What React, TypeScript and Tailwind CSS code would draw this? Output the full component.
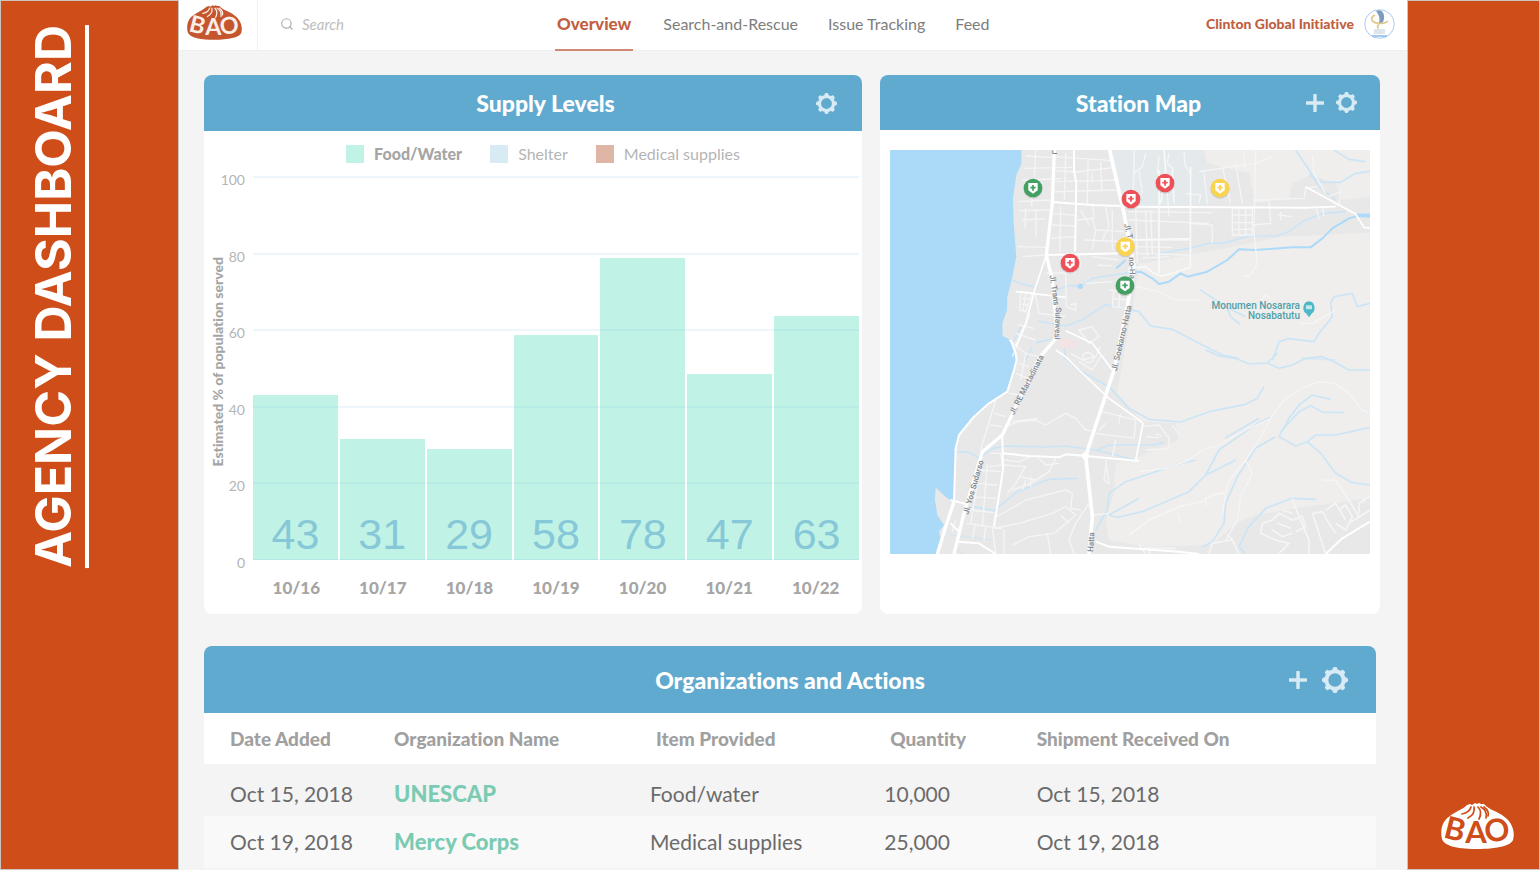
import { ReactNode } from "react";
import { Search } from "lucide-react";

interface SupplyDay {
  date: string;
  served: number;
  level: number;
}

interface Shipment {
  added: string;
  organization: string;
  item: string;
  quantity: string;
  received: string;
}

const supplyDays: SupplyDay[] = [
  { date: "10/16", served: 43, level: 43 },
  { date: "10/17", served: 31, level: 31.4 },
  { date: "10/18", served: 29, level: 29 },
  { date: "10/19", served: 58, level: 58.7 },
  { date: "10/20", served: 78, level: 78.7 },
  { date: "10/21", served: 47, level: 48.4 },
  { date: "10/22", served: 63, level: 63.6 },
];

const shipments: Shipment[] = [
  {
    added: "Oct 15, 2018",
    organization: "UNESCAP",
    item: "Food/water",
    quantity: "10,000",
    received: "Oct 15, 2018",
  },
  {
    added: "Oct 19, 2018",
    organization: "Mercy Corps",
    item: "Medical supplies",
    quantity: "25,000",
    received: "Oct 19, 2018",
  },
];

const stations = [
  { x: 462, y: 144, color: "#43a062" },
  { x: 756, y: 177, color: "#ee5058" },
  { x: 858, y: 129, color: "#ee5058" },
  { x: 1023, y: 144, color: "#fbd44f" },
  { x: 739, y: 320, color: "#fbd44f" },
  { x: 573, y: 369, color: "#ee5058" },
  { x: 738, y: 437, color: "#43a062" },
];

const BaoLogo = ({
  className,
  body,
  ink,
}: {
  className: string;
  body: string;
  ink: string;
}) => (
  <svg
    viewBox="0 0 73 46"
    className={`overflow-visible ${className}`}
    role="img"
    aria-label="BAO"
  >
    <path
      d="M26 2 L29 1 L31 2 L34 0 L36 1 L38 0 L40 1 L43 1 L45 3 C51 8 59 9 66 16 C72 22 74 30 72 37 C70 43 54 46 37 46 C19 46 4 44 1 36 C-1 27 1 18 9 13 C15 8 21 7 26 2 Z"
      fill={body}
    />
    <g stroke={ink} strokeWidth="1.7" fill="none" strokeLinecap="round">
      <path d="M30 4 C29 8 26 10 21 11" />
      <path d="M33 4 C34 9 31 13 27 15" />
      <path d="M37 4 C41 8 40 12 38 16" />
      <path d="M40 4 C45 7 46 11 45 15" />
      <path d="M43 4 C47 7 48 10 47 13" />
    </g>
    <g
      fill={ink}
      fontFamily="Lato, sans-serif"
      fontWeight="700"
      fontSize="31"
      textAnchor="middle"
    >
      <text x="13" y="37" transform="rotate(14 13 30)">
        B
      </text>
      <text x="35" y="40">
        A
      </text>
      <text x="56" y="38" transform="rotate(-8 56 28)">
        O
      </text>
    </g>
  </svg>
);

const GearIcon = ({ className }: { className: string }) => (
  <svg viewBox="0 0 26 26" className={className} aria-hidden="true">
    <circle cx="13" cy="13" r="8.7" fill="none" stroke="#d8ebf4" strokeWidth="4" />
    {[0, 45, 90, 135, 180, 225, 270, 315].map((angle) => (
      <rect
        key={angle}
        x="10.6"
        y="0"
        width="4.8"
        height="5"
        rx="1.8"
        fill="#d8ebf4"
        transform={`rotate(${angle} 13 13)`}
      />
    ))}
  </svg>
);

const PlusIcon = () => (
  <svg viewBox="0 0 18 18" className="size-[18px]" aria-hidden="true">
    <path d="M9 1 V17 M1 9 H17" stroke="#d8ebf4" strokeWidth="3.4" strokeLinecap="round" />
  </svg>
);

const CardHeader = ({
  title,
  className,
  children,
}: {
  title: string;
  className: string;
  children: ReactNode;
}) => (
  <div
    className={`grid grid-cols-[1fr_auto_1fr] items-center rounded-t-lg bg-[#61aacf] ${className}`}
  >
    <h2 className="col-start-2 text-[23px] leading-7 font-black text-white">
      {title}
    </h2>
    <div className="flex items-center justify-end">{children}</div>
  </div>
);

const SupplyLevels = () => (
  <section className="rounded-lg bg-white pb-[14px]">
    <CardHeader title="Supply Levels" className="h-14 pr-[25px] pl-[50px]">
      <button type="button" aria-label="Supply settings">
        <GearIcon className="size-[21px]" />
      </button>
    </CardHeader>

    {/* Legend */}
    <ul className="flex h-[45px] items-center justify-center gap-7 pl-5 text-base text-[#b5b5b5]">
      <li className="flex items-center gap-[10px] font-black text-[#a5a5a5]">
        <span className="size-[18px] bg-[#c0f3e6]" />
        Food/Water
      </li>
      <li className="flex items-center gap-[10px]">
        <span className="size-[18px] bg-[#d8ebf4]" />
        Shelter
      </li>
      <li className="flex items-center gap-[10px]">
        <span className="size-[18px] bg-[#dfb5a6]" />
        Medical supplies
      </li>
    </ul>

    <div className="flex pr-[3px]">
      <div className="flex w-7 items-center justify-center pb-3">
        <span className="rotate-180 text-sm leading-4 font-black whitespace-nowrap text-[#a5a5a5] [writing-mode:vertical-rl]">
          Estimated % of population served
        </span>
      </div>
      <div className="-mt-[6px] -mb-[13px] flex w-[21px] flex-col items-end justify-between pr-2 text-sm leading-5 text-[#b5b5b5]">
        {[100, 80, 60, 40, 20, 0].map((tick) => (
          <span key={tick}>{tick}</span>
        ))}
      </div>

      {/* Bars and grid lines share one cell */}
      <div className="grid h-96 flex-1">
        <div className="col-start-1 row-start-1 grid grid-cols-7 items-end gap-[2px]">
          {supplyDays.map((day) => (
            <div
              key={day.date}
              className="flex items-end justify-center bg-[#c0f3e6] pb-[2px] font-['Liberation_Sans',Arial,sans-serif] text-[43px] leading-[48px] text-[#87c8d8]"
              style={{ height: `${day.level}%` }}
            >
              {day.served}
            </div>
          ))}
        </div>
        <div className="col-start-1 row-start-1 grid grid-rows-5 border-b border-[#7dc4ea]/20">
          {[100, 80, 60, 40, 20].map((line) => (
            <div key={line} className="border-t-2 border-[#7dc4ea]/15" />
          ))}
        </div>
      </div>
    </div>

    <div className="mt-4 grid grid-cols-7 pr-[3px] pl-[49px] text-center text-[17px] leading-6 font-black text-[#a5a5a5]">
      {supplyDays.map((day) => (
        <span key={day.date}>{day.date}</span>
      ))}
    </div>
  </section>
);

const MapDrawing = () => (
  <svg
    viewBox="33 30 1440 1212"
    className="block w-full"
    role="img"
    aria-label="Map of relief stations"
  >
    {/* Land and sea */}
    <rect x="33" y="30" width="1440" height="1212" fill="#e8e8e8" />
    <path
      d="M975 30 H1473 V170 L1390 180 L1370 130 L1300 105 L1240 130 L1230 175 L1130 190 L1110 100 L985 70 Z"
      fill="#efeeec"
    />
    <path
      d="M780 372 L900 350 L1040 325 L1210 290 L1473 278 V1075 L1280 1100 L1130 1125 L1070 1150 L1000 1215 L800 1220 L690 1200 L680 1140 L705 1060 L710 970 L780 950 L900 900 L890 850 L790 845 L715 760 L735 640 L762 500 Z"
      fill="#efeeec"
    />
    <path d="M692 30 H970 L992 195 L740 198 Z" fill="#e4e9ec" />
    <path d="M535 590 L600 605 L580 628 L545 622 Z" fill="#f3e3e3" />
    <path
      d="M33 30 H427 V72 L412 105 L402 175 L404 250 L412 350 L398 420 L385 470 L384 510 L370 550 L371 588 L395 600 L410 635 L413 660 L405 690 L385 755 L330 790 L285 830 L240 885 L230 925 L225 1085 L205 1075 L170 1043 L168 1080 L175 1125 L195 1155 L180 1175 L185 1195 L172 1242 H33 Z"
      fill="#abdaf9"
    />

    {/* Rivers */}
    <g fill="none" stroke="#cbe5f6" strokeWidth="5" strokeLinejoin="round">
      <path d="M398 420 L430 432 L465 440 M535 450 L570 436 L604 440 L640 415 L720 402 L780 395" />
      <path d="M475 543 L560 558 L610 540 L680 494 L780 515 L815 558 L880 568 L960 610 L1030 645 L1080 655" />
      <path d="M403 605 L425 560 M470 608 L520 597 M440 660 L460 620 M555 625 L560 655 L600 690 L690 740 L750 805 L810 838 L905 846 L990 815 L1100 793 L1135 775 L1155 740" />
      <path d="M235 935 L270 937 L300 955 L340 925 L380 918 L500 921 L560 918 L650 930 L770 960" />
      <path d="M285 1100 L345 1112 L415 1055 L510 1018 L595 1015 M655 930 L690 915 L820 915 L855 908" />
      <path d="M690 1125 L715 1132 L790 1115 L930 1055 L980 1005 L1020 930 L1070 895 L1135 850 L1175 832" />
      <path d="M650 1170 L685 1110 L690 1060 L740 1025 L890 975 L950 960 M690 1125 L780 1075 M980 1005 L1070 960 M1038 895 L1140 835" />
      <path d="M1250 30 L1290 90 L1320 140 L1370 180 M1290 105 L1330 127 L1385 127 L1430 100 L1473 94 M1365 30 L1410 58 L1458 65" />
      <path d="M815 345 L930 325 L990 310 L1040 308 L1110 288 L1190 288 L1230 275 L1270 245 L1330 220 L1400 215" />
      <path d="M962 448 L1040 500 L1100 530 M1045 505 L1055 530 L1082 552" />
      <path d="M1180 660 L1200 605 L1230 596 L1305 605 L1320 580 L1360 530 L1355 490 L1365 470 L1420 460 L1435 500 L1473 490" />
      <path d="M980 630 L1020 648 L1070 655 L1110 672 L1165 669 L1200 685 L1240 675 L1280 655 L1330 650 L1365 665 L1410 690 L1473 690 M1165 669 L1195 640" />
      <path d="M1200 890 L1230 835 L1260 795 L1300 765 L1355 778 M1205 875 L1260 815 L1295 797 L1330 816 L1395 818 M1200 890 L1250 918 L1285 905 L1310 885 L1370 885 L1473 862 M1285 905 L1325 940 L1370 1000 L1420 1028 L1473 1035" />
      <path d="M1190 890 L1130 925 L1075 1010 L1040 1090 L1035 1150 L1000 1205 L970 1220 M1100 1242 L1080 1220 L1110 1160 L1160 1105 L1240 1075 L1310 1078" />
      <path d="M215 1185 L260 1190 L340 1200 M235 1230 L255 1240 M1265 655 L1370 660" opacity="0.6" />
    </g>
    <g fill="none" stroke="#addaf8" strokeWidth="6" strokeLinejoin="round">
      <path d="M712 385 L740 360 M750 398 L785 395 L820 415 L840 432 L870 425 L905 400 L925 410 L985 395 L1045 360 L1080 328 L1130 330 L1240 322 L1295 322 L1330 295 L1360 265 L1410 235 L1440 226 L1473 228" />
      <path d="M1430 226 L1473 227" strokeWidth="11" />
    </g>
    <circle cx="604" cy="439" r="8" fill="#addaf8" />

    {/* Side streets */}
    <g fill="none" stroke="#f5f5f5" strokeWidth="4">
      <path d="M440 48 L520 52 M435 85 L580 82 M430 120 L550 116 M470 30 L466 110 M420 185 L520 180 M460 150 L458 200 M420 212 L515 210 M430 240 L500 236 M440 205 L438 265 M470 210 L472 290 M415 320 L500 322 M430 350 L495 345" />
      <path d="M530 50 L700 62 M530 92 L590 96 L710 82 M530 125 L720 120 M525 155 L720 150 M560 40 L556 180 M627 60 L625 190 M665 65 L668 150 M640 100 L640 130 M525 220 L590 226 M520 255 L590 258 M515 295 L590 290 M545 200 L543 335 M595 240 L640 235 L650 270 L735 275 M605 210 L630 255 M640 190 L645 235 M680 200 L690 260 L670 300 M615 300 L735 305 M650 270 L640 330 M700 210 L700 330" />
      <path d="M425 455 L460 458 L440 515 L422 510 Z M430 475 L455 477 M428 492 L450 495 M442 455 L432 512 M470 465 L480 520 L560 530 M560 400 L562 500 L590 510 L590 490 L575 495 M500 400 L590 398 M620 430 L700 425 M640 350 L720 360 M655 375 L700 378 M600 345 L605 380 M690 450 L750 455 M697 475 L745 480 M700 500 L740 505 M705 450 L700 500 M722 450 L720 505" />
      <path d="M390 600 L440 640 L480 650 M410 580 L470 600 M420 555 L465 565 M455 520 L400 650 M600 570 L640 560 L660 590 L630 610 Z M575 640 L610 660 L650 650 L665 620 M600 665 L640 690 L665 650 M615 640 C640 630 650 655 640 665 C620 675 605 655 615 640 M410 700 L460 720 M420 670 L450 680 M390 760 L420 765 M440 640 L425 720" />
      <path d="M350 780 L305 930 M345 820 L380 830 M335 855 L370 860 M380 860 L420 845 L470 840 L500 855 L560 820 L590 835 L620 870 L650 875 M400 845 L475 835" />
      <path d="M335 940 L365 940 L370 975 L330 980 M375 960 L420 965 L455 950 M300 990 L365 995 M290 1030 L355 1035 M280 1070 L350 1075 M270 1110 L345 1118 M325 970 L310 1160 M300 1000 L275 1150 M375 975 L440 980 L410 1030 L385 1060 M400 1050 L455 1030 L510 995 L530 955 M480 955 L500 975 L540 970 M420 1010 L470 1020 M430 1050 L440 1020 M455 1040 L455 1010" />
      <path d="M350 1130 L390 1110 L440 1080 L500 1065 L560 1050 L580 1060 L575 1105 L605 1110 M345 1165 L420 1150 L520 1120 L560 1100 L590 1125 L555 1155 L525 1180 L450 1190 L400 1215 M545 1125 L570 1150 M505 1180 L515 1242 M630 1090 L590 1150 L570 1200 L585 1242 M375 1170 L375 1240 M340 1160 L350 1242 M260 1150 L370 1165 M230 1140 L220 1175 M290 1150 L280 1195 M320 1160 L315 1200 M680 960 L690 1030 L675 1020 L680 980 M640 1125 L690 1120" />
      <path d="M670 815 L770 840 L765 895 L650 880 M725 820 L720 850 M660 870 L680 850 M710 900 L700 950 M790 860 L840 855 L870 895 L870 925 L800 930 M830 880 L850 890 M800 890 L840 893 M880 855 L900 885" />
      <path d="M765 30 L765 120 M800 40 L790 80 L765 100 L760 195 M840 50 L835 100 M870 40 L865 70 L885 90 M915 35 L918 75 L935 100 M780 95 L790 160 M750 215 L1000 218 M750 240 L990 250 M770 205 L775 370 M800 210 L805 350 M765 300 L930 300 M765 320 L880 322 M770 340 L930 345 M790 355 L870 350 M815 210 L820 340 M865 160 L870 230 M920 160 L965 165 L960 190 M960 95 L1130 70 L1180 50 M975 100 L985 190 M1030 80 L1055 190 M1070 70 L1090 190 M1095 35 L1098 90 M930 250 L1000 255 L1000 310 M1060 205 V285 H1120 V205 Z M1060 225 H1120 M1060 248 H1120 M1060 268 H1120 M1080 205 V285 M1100 205 V285 M1130 30 L1125 280 L1135 370 L1115 405 L1095 410" />
      <path d="M1120 180 L1170 180 L1175 250 L1120 255 M1170 178 L1275 175 L1280 145 L1315 140 M1200 225 L1240 230 M1205 215 V240 M1310 200 L1320 235 M1330 200 L1335 230 M1300 45 L1305 100 L1340 160 M1350 170 L1385 155 L1380 195 M1140 490 L1160 465 L1175 475 M770 440 L840 455 L890 480 L960 480 M1260 550 L1300 550 L1370 510 M1310 540 L1320 550" />
      <path d="M780 995 L860 985 L920 965 L980 925 L1010 920 L1100 870 L1175 835 M1175 835 L1215 780 L1270 745 L1320 725 L1370 732 L1410 760 L1450 810 L1473 820 M1175 835 L1140 900 L1100 960 L1045 1030 L1030 1120 M1100 960 L1120 1000 L1085 1070 L1075 1140 L1040 1200 M895 1120 L905 1150 M980 1070 L980 1100" />
      <path d="M750 1185 L810 1140 L900 1100 L970 1085 L1000 1065 L1040 1058 M780 1215 L800 1242 M790 1225 L890 1225 M810 1220 L812 1242 M990 1242 L1000 1210 L1060 1200 L1080 1242 M1045 1185 L1060 1200" strokeWidth="5" />
      <path d="M1150 1150 L1180 1140 L1200 1120 L1240 1140 L1270 1130 L1280 1160 L1250 1175 M1150 1150 L1145 1180 L1190 1200 L1230 1210 L1200 1240 M1180 1170 L1210 1190 L1240 1180 M1195 1150 L1235 1165 M1210 1110 L1240 1120 M1240 1075 L1260 1130 L1290 1200 L1290 1242 M1300 1120 L1320 1180 L1340 1242 M1300 1120 L1330 1115 L1350 1150 L1370 1180 M1340 1110 L1370 1090 L1400 1140 M1370 1150 L1400 1170 L1420 1130 M1380 1110 L1400 1095 L1420 1130 M1330 1020 L1370 1022 L1400 1065 L1440 1130 M1410 1150 L1473 1110 M1450 1080 L1473 1070 M1440 1120 L1440 1090 L1460 1080" strokeWidth="5" />
    </g>

    {/* Main roads */}
    <g fill="none" stroke="#ffffff" strokeLinejoin="round">
      <path d="M585 30 V90 L592 130 L588 335 M520 186 L640 195 L725 198 M500 345 L735 340 M725 200 L1290 203" strokeWidth="6" />
      <path d="M840 90 L840 400 M935 80 L934 380 M880 90 L885 190 M855 30 L860 90 L845 190 M750 300 L932 296 M750 385 L800 380 L825 400 L845 408 L880 400 L934 382" stroke="#f9f9f9" strokeWidth="5" />
      <path d="M502 345 L470 440 L440 550 L410 620 M410 455 L560 472 M560 572 L640 610 L700 690 M750 385 L760 440" strokeWidth="5" />
      <path d="M530 630 L560 650 L600 690 L690 775 L780 840 L792 850 L770 962 M1290 203 L1370 200 M1280 140 L1380 195 L1430 222 L1455 262 L1473 265" strokeWidth="5" />
      <path d="M373 940 L450 948 L540 952 L560 943 L620 948 L780 963 M370 890 L372 990 L345 1160 M215 1080 L260 1092 M215 1150 L240 1175 M650 1205 L690 1220 L900 1235 L960 1242 M1340 1242 L1390 1195 L1473 1145" strokeWidth="6" />
      <path d="M395 600 L410 640 L413 660 L405 690 L385 755 L330 790 L285 830 L240 885 L230 925 L225 1085 M235 1205 L300 1210 L350 1242" strokeWidth="6" />
      <path d="M526 30 L520 190 L502 345 L520 420 L535 590 L480 655 L370 885 L310 935 L255 1120 L225 1242 M225 1085 L200 1160 L175 1242" strokeWidth="10" />
      <path d="M692 30 L735 220 L765 380 L745 500 L705 690 L620 948 L640 1130 L630 1242" strokeWidth="11" />
      <circle cx="620" cy="948" r="11" fill="#ffffff" stroke="none" />
    </g>

    {/* Place names */}
    <g
      fill="#7d868c"
      fontFamily="Roboto, sans-serif"
      fontSize="24"
      fontWeight="500"
    >
      <text x="518" y="30" transform="rotate(90 518 30)">J</text>
      <text x="512" y="406" transform="rotate(82 512 406)">Jl. Trans</text>
      <text x="530" y="502" transform="rotate(92 530 502)">Sulawesi</text>
      <text x="735" y="253" transform="rotate(76 735 253)">Jl. T</text>
      <text x="750" y="352" transform="rotate(88 750 352)">no-Ha</text>
      <text x="713" y="694" transform="rotate(-77 713 694)">Jl. Soekarno-Hatta</text>
      <text x="405" y="826" transform="rotate(-63 405 826)">Jl. RE Martadinata</text>
      <text x="268" y="1124" transform="rotate(-74 268 1124)">Jl. Yos Sudarso</text>
      <text x="642" y="1236" transform="rotate(-86 642 1236)">Hatta</text>
    </g>
    <g
      fill="#4fa0a9"
      fontFamily="Roboto, sans-serif"
      fontSize="30"
      fontWeight="500"
      textAnchor="end"
    >
      <text x="1263" y="506">Monumen Nosarara</text>
      <text x="1263" y="536">Nosabatutu</text>
    </g>
    <path
      d="M1290 532 L1281 520 C1268 514 1271 484 1290 484 C1309 484 1312 514 1299 520 Z"
      fill="#4db9c8"
    />
    <rect x="1281" y="496" width="18" height="12" rx="2" fill="#c4e6ea" />

    {/* Stations */}
    {stations.map((station) => (
      <g
        key={`${station.x}-${station.y}`}
        transform={`translate(${station.x} ${station.y})`}
      >
        <circle cy="3" r="29" fill="#000000" opacity="0.12" />
        <circle r="28" fill={station.color} />
        <path d="M-14 -15 H14 V7 L0 17 L-14 7 Z" fill="#ffffff" />
        <path d="M0 -9 V8 M-8 -1 H8" stroke={station.color} strokeWidth="5" />
      </g>
    ))}
  </svg>
);

const StationMap = () => (
  <section className="rounded-lg bg-white">
    <CardHeader title="Station Map" className="h-[55px] pr-[23px] pl-10">
      <div className="flex items-center gap-3">
        <button type="button" aria-label="Add station">
          <PlusIcon />
        </button>
        <button type="button" aria-label="Map settings">
          <GearIcon className="size-[21px]" />
        </button>
      </div>
    </CardHeader>
    <div className="px-[10px] pt-5">
      <MapDrawing />
    </div>
  </section>
);

const Organizations = () => (
  <section>
    <CardHeader title="Organizations and Actions" className="h-[67px] px-7">
      <div className="flex items-center gap-[15px]">
        <button type="button" aria-label="Add organization">
          <PlusIcon />
        </button>
        <button type="button" aria-label="Organization settings">
          <GearIcon className="size-[26px]" />
        </button>
      </div>
    </CardHeader>
    <table className="w-full table-fixed text-left">
      <thead>
        <tr className="h-[51px] bg-white text-[19px] leading-6 text-[#a0a0a0]">
          <th className="w-[14%] pl-[26px] font-black">Date Added</th>
          <th className="w-[22%] pl-[26px] font-black">Organization Name</th>
          <th className="w-[20%] pl-[30px] font-black">Item Provided</th>
          <th className="w-[13%] pl-[30px] font-black">Quantity</th>
          <th className="pl-6 font-black">Shipment Received On</th>
        </tr>
      </thead>
      <tbody>
        {shipments.map((row) => (
          <tr
            key={row.organization}
            className="h-[52px] bg-[#f9f9f9] text-[21px] leading-7 text-[#6b6b6b] odd:bg-[#f4f4f4] first:*:pt-2"
          >
            <td className="pl-[26px]">{row.added}</td>
            <td className="pl-[26px]">
              <a
                href="#organization"
                className="text-[22px] font-black text-[#7bcbb3]"
              >
                {row.organization}
              </a>
            </td>
            <td className="pl-6">{row.item}</td>
            <td className="pl-6">{row.quantity}</td>
            <td className="pl-6">{row.received}</td>
          </tr>
        ))}
      </tbody>
    </table>
  </section>
);

const TopBar = () => (
  <header className="flex h-[51px] border-b border-[#efefef] bg-white">
    <div className="flex w-[376px] shrink-0">
      <a
        href="#home"
        className="flex w-[79px] justify-center border-r border-[#f2f2f2] pt-[5px] pr-2"
      >
        <BaoLogo className="h-[35px] w-[55px]" body="#c4552f" ink="#fbeee6" />
      </a>
      <div className="flex items-center gap-2 pb-[2px] pl-[22px]">
        <label htmlFor="search">
          <Search
            role="img"
            aria-label="Search"
            className="size-[14px] text-[#b0b0b0]"
            strokeWidth={2}
          />
        </label>
        <input
          id="search"
          type="text"
          placeholder="Search"
          className="h-8 w-40 text-[15px] leading-6 italic outline-none placeholder:text-[#bdbdbd]"
        />
      </div>
    </div>
    <nav className="flex gap-[30px] text-base leading-6 text-[#7d7d7d]">
      <a
        href="#overview"
        className="-mb-px border-b-2 border-[#cf8a75] px-[2px] pt-3 text-[17px] font-black text-[#c25f3f]"
      >
        Overview
      </a>
      <a href="#search-and-rescue" className="pt-3">
        Search-and-Rescue
      </a>
      <a href="#issues" className="pt-3">
        Issue Tracking
      </a>
      <a href="#feed" className="pt-3">
        Feed
      </a>
    </nav>
    <div className="ml-auto flex items-center gap-[10px] pr-3 pb-[2px]">
      <span className="text-sm font-black text-[#c0603f]">
        Clinton Global Initiative
      </span>
      <svg viewBox="0 0 31 30" className="h-[30px] w-[31px]" aria-hidden="true">
        <ellipse cx="15.5" cy="15" rx="14.8" ry="14.3" fill="#ffffff" stroke="#a9ccf0" />
        <path d="M12 2 C19 -1 22 7 19 13 L14 16 C17 10 15 6 12 2 Z" fill="#7f9cbd" />
        <path
          d="M11 6 C5 9 8 14 14 14 C19 15 22 14 24 12 M15 15 C13 17 13 19 15 19"
          fill="none"
          stroke="#dcc689"
          strokeWidth="1.6"
        />
        <rect x="10" y="20" width="11" height="5" fill="#dde5ef" />
        <path d="M8 27 H23" stroke="#8db8ea" strokeWidth="1.5" />
      </svg>
    </div>
  </header>
);

export default function App() {
  return (
    <div className="flex min-h-screen bg-[#f4f4f4] font-[Lato,sans-serif] [font-variant-ligatures:none]">
      <aside className="flex w-[179px] shrink-0 items-start border border-[#cfc4bd] bg-[#ce4d19] pt-6 pl-6">
        <h1 className="rotate-180 border-l-4 border-white pl-1 font-[Inter,sans-serif] text-[50px] leading-[56px] font-bold whitespace-nowrap text-white [writing-mode:vertical-rl]">
          AGENCY DASHBOARD
        </h1>
      </aside>

      <main className="min-w-0 flex-1">
        <TopBar />
        <div className="pt-6 pr-[27px] pl-[25px]">
          <div className="grid grid-cols-[658fr_500fr] gap-[18px]">
            <SupplyLevels />
            <StationMap />
          </div>
          <div className="mt-8 pr-1">
            <Organizations />
          </div>
        </div>
      </main>

      <aside className="flex w-[133px] shrink-0 items-end justify-end border border-[#cfc4bd] bg-[#ce4d19] pr-[25px] pb-5">
        <BaoLogo className="h-[46px] w-[73px]" body="#ffffff" ink="#ce4d19" />
      </aside>
    </div>
  );
}
